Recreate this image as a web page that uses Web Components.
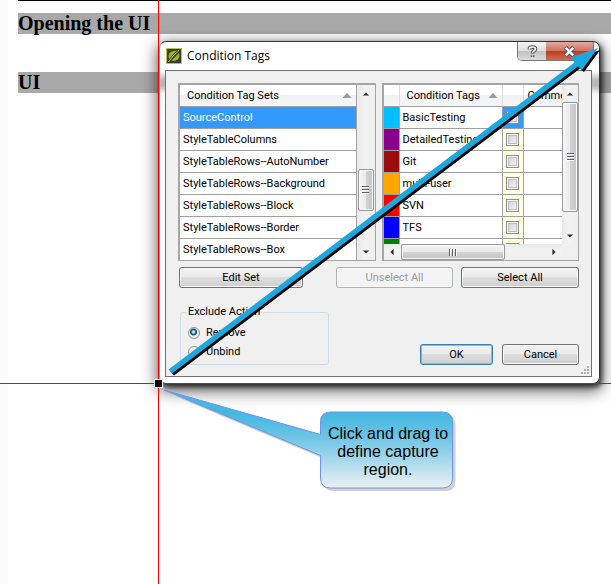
<!DOCTYPE html>
<html lang="en">
<head>
<meta charset="utf-8">
<title>Opening the UI</title>
<style>
html, body { margin: 0; min-height: 100%; background: #fff; }
</style>
</head>
<body>
<help-page>
  <doc-heading>Opening the UI</doc-heading>
  <doc-heading>UI</doc-heading>
  <condition-dialog slot="window"></condition-dialog>
  <capture-overlay slot="notes">Click and drag to define capture region.</capture-overlay>
</help-page>
<script>
class Base extends HTMLElement {
  connectedCallback() {
    if (this.shadowRoot) return;
    this.attachShadow({ mode: 'open' }).innerHTML = this.render();
  }
}
const define = (name, render) => customElements.define(name, class extends Base {
  render() { return render(this); }
});

define('help-page', () => `
<style>
:host { display: block; position: relative; min-height: 584px; overflow: hidden; box-sizing: border-box; padding-left: 18px; background: linear-gradient(90deg, #fbfbfb 8px, #fff 8px); }
article { display: flex; flex-direction: column; gap: 38px; border-top: 1px solid #000; padding-top: 12px; }
</style>
<article><slot></slot></article>
<slot name="window"></slot>
<slot name="notes"></slot>`);

define('doc-heading', () => `
<style>
:host { display: block; }
h2 { margin: 0; background: #a9a9a9; color: #000; font: bold 20px/21px "Liberation Serif", serif; }
</style>
<h2><slot></slot></h2>`);

define('push-button', el => `
<style>
:host { display: flex; }
button { flex: 1; height: 21px; padding: 0; margin: 0; box-sizing: border-box; border: 1px solid #707070; border-radius: 3px; color: #000;
  background: linear-gradient(#f2f2f2, #ebebeb 50%, #dcdcdc 50%, #cfcfcf); box-shadow: inset 0 0 0 1px #fafafa; font: 11px/18px Roboto, "Liberation Sans", sans-serif; }
button:disabled { color: #9a9a9a; border-color: #adb2b5; background: #f4f4f4; }
:host([primary]) button { border-color: #3c7fb1; box-shadow: inset 0 0 0 1px #4dd0f5; }
</style>
<button type="button" ${el.hasAttribute('disabled') ? 'disabled' : ''}><slot></slot></button>`);

define('scroll-bar', el => {
  const h = el.hasAttribute('horizontal');
  const d = h ? ['M7 1 L3 5 L7 9Z', 'M3 1 L7 5 L3 9Z'] : ['M1 7 L5 3 L9 7Z', 'M1 3 L5 7 L9 3Z'];
  const arrow = (path, label) => `<button type="button" aria-label="${label}"><svg width="8" height="8" viewBox="0 0 10 10"><path d="${path}" fill="#303030"/></svg></button>`;
  return `
<style>
:host { display: flex; flex-direction: ${h ? 'row' : 'column'}; background: linear-gradient(${h ? '180deg' : '90deg'}, #e9e9e9, #f2f2f2 40%, #f0f0f0); min-width: 0; min-height: 0; }
button { display: flex; align-items: center; justify-content: center; flex: 0 0 17px; padding: 0; border: 0; background: none; }
.track { flex: 1; display: flex; flex-direction: inherit; min-height: 0; min-width: 0; }
.before { flex: var(--before, 0) 1 0; } .after { flex: var(--after, 0) 1 0; }
.thumb { flex: var(--size, 1) 1 0; display: flex; align-items: center; justify-content: center; box-sizing: border-box; border: 1px solid #979797; border-radius: 2px;
  background: linear-gradient(${h ? '180deg' : '90deg'}, #f5f5f5, #e9e9e9 50%, #d4d4d6 50%, #c3c4c6); box-shadow: inset 0 0 0 1px #fafafa; }
.grip { width: ${h ? 8 : 7}px; height: ${h ? 7 : 8}px; background: repeating-linear-gradient(${h ? '90deg' : '180deg'}, #606060 0 1px, #fff 1px 2px, transparent 2px 3px); }
</style>
${arrow(d[0], h ? 'Scroll left' : 'Scroll up')}
<div class="track"><div class="before"></div><div class="thumb"><div class="grip"></div></div><div class="after"></div></div>
${arrow(d[1], h ? 'Scroll right' : 'Scroll down')}`;
});

const tableStyle = `
:host { display: grid; box-sizing: border-box; height: 178px; border: 2px solid #a5a5a8; border-right-width: 1px; border-bottom-width: 1px; background: #f0f0f0; overflow: hidden; }
.view { overflow: hidden; min-height: 0; min-width: 0; background: #fff; }
table { width: 100%; table-layout: fixed; border-collapse: separate; border-spacing: 0; font: 11px/21px Roboto, "Liberation Sans", sans-serif; }
th, td { box-sizing: border-box; padding: 0; height: 22px; text-align: left; font-weight: normal; white-space: nowrap; overflow: hidden; border-bottom: 1px solid #a0a0a0; }
th { background: linear-gradient(#fff 45%, #f1f2f4 50%, #f4f5f6); }
th > div { display: flex; align-items: center; justify-content: space-between; padding: 0 4px 0 7px; }
.sort { width: 9px; height: 5px; background: #999; clip-path: polygon(50% 0, 100% 100%, 0 100%); }
td { padding-left: 3px; }
`;

define('tag-set-list', () => {
  const rows = ['SourceControl', 'StyleTableColumns', 'StyleTableRows--AutoNumber', 'StyleTableRows--Background', 'StyleTableRows--Block', 'StyleTableRows--Border', 'StyleTableRows--Box'];
  return `
<style>${tableStyle}
:host { grid-template-columns: 1fr 18px; }
.view { border-right: 1px solid #a0a0a0; }
.selected td { background: #3399ff; color: #fff; }
scroll-bar { --before: 68; --size: 41; --after: 32; margin: 0 1px; }
</style>
<div class="view"><table>
<thead><tr><th scope="col"><div>Condition Tag Sets <span class="sort"></span></div></th></tr></thead>
<tbody>${rows.map((r, i) => `<tr${i ? '' : ' class="selected"'}><td>${r}</td></tr>`).join('')}</tbody>
</table></div><scroll-bar></scroll-bar>`;
});

define('tag-list', () => {
  const rows = [['BasicTesting', '#00bfff'], ['DetailedTesting', '#8b008b'], ['Git', '#990d0d'], ['multi-user', '#ffa500'], ['SVN', '#ff0000'], ['TFS', '#0000ff'], ['', '#008000']];
  return `
<style>${tableStyle}
:host { grid-template-columns: 1fr 16px; grid-template-rows: 1fr 16px; }
table { width: 210px; }
th:not(:last-child), td:not(:last-child) { border-right: 1px solid #a0a0a0; }
th:not(:last-child) { border-right-color: #dcdcdc; }
th:last-child > div { padding-left: 4px; }
td:nth-child(3) { background: #fffee1; padding: 0; text-align: center; }
tbody tr:first-child td:nth-child(3) { background: #3399ff; }
input { appearance: none; display: block; width: 13px; height: 13px; margin: 0 auto; box-sizing: border-box; border: 1px solid #8e8f8f; background: linear-gradient(135deg, #c9cdd4, #fafafa); box-shadow: inset 0 0 0 1px #f4f4f4, inset 0 0 0 2px #bcc0c6; }
.right { --before: 0; --size: 108; --after: 15; }
.bottom { --before: 0; --size: 105; --after: 41; }
</style>
<div class="view"><table>
<colgroup><col style="width:16px"><col style="width:103px"><col style="width:21px"><col></colgroup>
<thead><tr><th></th><th scope="col"><div>Condition Tags <span class="sort"></span></div></th><th></th><th scope="col"><div>Comment</div></th></tr></thead>
<tbody>${rows.map(([n, c]) => `<tr><td style="background:${c}"></td><td>${n}</td><td><input type="checkbox" aria-label="${n || 'Tag'}"></td><td></td></tr>`).join('')}</tbody>
</table></div><scroll-bar class="right"></scroll-bar><scroll-bar class="bottom" horizontal></scroll-bar>`;
});

define('exclude-action', () => `
<style>
:host { display: block; width: 149px; }
fieldset { margin: 0; padding: 7px 7px 5px; min-width: 0; border: 1px solid #d3dce4; border-radius: 3px; font: 11px/14px Roboto, "Liberation Sans", sans-serif; display: flex; flex-direction: column; gap: 5px; }
legend { padding: 0 1px; margin-left: -1px; }
label { display: flex; align-items: center; gap: 6px; }
input { appearance: none; box-sizing: border-box; width: 12px; height: 12px; margin: 0; border: 1px solid #8e8f8f; border-radius: 50%; background: radial-gradient(#e4e4e4, #fff); }
input:checked { background: radial-gradient(circle at 45% 40%, #b9ecfb 0 1px, #2d84b5 2px, #163d5a 3px, #f0f0f0 4px, #f4f4f4); }
</style>
<fieldset><legend>Exclude Action</legend>
<label><input type="radio" name="action" checked>Remove</label>
<label><input type="radio" name="action">Unbind</label>
</fieldset>`);

define('condition-dialog', () => `
<style>
:host { position: absolute; left: 159px; top: 41px; width: 441px; box-sizing: border-box; display: flex; flex-direction: column; padding: 0 7px 6px 5px;
  border: 1px solid #333; border-left-color: #999; border-radius: 7px; background: linear-gradient(#fff, #fff 29px, #e8e8e8 32px, #b9b9b9 38px, #b9b9b9 44px, #f8f8f8 52px, #fff 80px);
  box-shadow: 2px 3px 5px rgba(0,0,0,.7), 0 5px 15px 3px rgba(0,0,0,.55); }
header { display: flex; flex: 0 0 28px; gap: 5px; background: #fff; border-radius: 6px; }
.logo { margin: 6px 0 0 1px; }
h1 { flex: 1; margin: 0; font: 12px/28px "Open Sans", "Noto Sans", sans-serif; }
.caption { display: flex; height: 19px; border: 1px solid #777; border-top: 0; border-radius: 0 0 5px 5px; overflow: hidden; box-sizing: border-box; margin-right: -2px; }
.caption button { padding: 0; border: 0; display: flex; align-items: center; justify-content: center; }
.help { width: 28px; background: linear-gradient(#f5f5f5, #ddd 50%, #c0c0c4 50%, #dcdcdc); }
.close { width: 47px; background: linear-gradient(#e4aaa0, #cf705f 50%, #b93c24 50%, #d36a4c); }
main { display: flex; flex-direction: column; box-sizing: border-box; padding: 12px 12px 11px; border: 1px solid #707070; background: #f0f0f0; position: relative; }
.lists { display: grid; grid-template-columns: 1fr 1fr; gap: 6px; }
.actions { display: grid; grid-template-columns: 124px 1fr 118px; column-gap: 8px; padding: 6px 0 0 1px; }
.actions > :nth-child(2) { margin-left: 25px; }
.foot { display: flex; justify-content: space-between; align-items: flex-end; padding: 17px 0 0 2px; }
.ok { display: grid; grid-template-columns: 73px 77px; gap: 9px; }
.size { position: absolute; right: 1px; bottom: 1px; }
</style>
<header>
<svg class="logo" width="16" height="16" viewBox="0 0 16 16" aria-hidden="true"><rect x=".5" y=".5" width="15" height="15" fill="#3b3b35" stroke="#b5c927"/><path d="M3 10.500C1 5 6 2 11.500 3L4.500 11.500ZM13 5C15 11 10 14 5.500 12.500Z" fill="#9db22d"/><path d="M2.500 14Q6 8 13 2.500" fill="none" stroke="#3b3b35" stroke-width="2"/><path d="M2.500 14Q6 8 13 2.500" fill="none" stroke="#c8db35" stroke-width="1"/></svg>
<h1>Condition Tags</h1>
<div class="caption">
<button class="help" type="button" aria-label="Help"><svg width="11" height="13" viewBox="0 0 11 13"><g fill="none"><path d="M2.500 4.500V3.500Q2.500 2 5.500 2T8.500 4Q8.500 5 6.500 6.200Q5.500 7 5.500 8.500M5.500 10V12" stroke="#4a4e59" stroke-width="3.600"/><path d="M2.500 4.200V3.500Q2.500 2 5.500 2T8.500 4Q8.500 5 6.500 6.200Q5.500 7 5.500 8M5.500 10.200V11.500" stroke="#fff" stroke-width="1.600"/></g></svg></button>
<button class="close" type="button" aria-label="Close"><svg width="13" height="11" viewBox="0 0 13 11"><path d="M2.500 1.500L10.500 9.500M10.500 1.500L2.500 9.500" stroke="#535666" stroke-width="4.500"/><path d="M2.700 1.700L10.300 9.300M10.300 1.700L2.700 9.300" stroke="#fff" stroke-width="2.500"/></svg></button>
</div>
</header>
<main>
<div class="lists"><tag-set-list></tag-set-list><tag-list></tag-list></div>
<div class="actions"><push-button>Edit Set</push-button><push-button disabled>Unselect All</push-button><push-button>Select All</push-button></div>
<div class="foot"><exclude-action></exclude-action><div class="ok"><push-button primary>OK</push-button><push-button>Cancel</push-button></div></div>
<svg class="size" width="10" height="10" viewBox="0 0 10 10" fill="#b0b0b0" aria-hidden="true"><path d="M7 1h2v2h-2zM7 4h2v2h-2zM7 7h2v2h-2zM4 4h2v2h-2zM4 7h2v2h-2zM1 7h2v2h-2z"/></svg>
</main>`);

define('capture-overlay', () => `
<style>
:host { position: absolute; inset: 0; pointer-events: none; }
svg { position: absolute; inset: 0; width: 100%; height: 100%; overflow: visible; }
p { position: absolute; left: 320px; top: 412px; width: 133px; box-sizing: border-box; margin: 0; padding: 13px 3px 9px 6px; font: 16px/18px "Liberation Sans", sans-serif; text-align: center; }
</style>
<svg aria-hidden="true">
<defs><linearGradient id="g" gradientUnits="userSpaceOnUse" x1="0" y1="412" x2="0" y2="489"><stop offset="0" stop-color="#43b7e1"/><stop offset=".3" stop-color="#68c3e4"/><stop offset="1" stop-color="#edf1f4"/></linearGradient>
<path id="c" d="M330.500 412H442.500Q452.500 412 452.500 422V478Q452.500 488 442.500 488H330.500Q320.500 488 320.500 478V455.500L164 390L320.500 434.500V422Q320.500 412 330.500 412Z"/></defs>
<rect x="158" y="0" width="1" height="100%" fill="red"/><rect x="0" y="383" width="100%" height="1" fill="red"/>
<rect x="154.500" y="379.500" width="8" height="8" fill="#000" stroke="#fff"/>
<use href="#c" transform="translate(3 3)" fill="#d0d0d0"/>
<use href="#c" fill="url(#g)" stroke="#6f93e8"/>
<path d="M168.500 369.500L574.500 62.500L570.500 57.500L598 48L582 70L578 66.500L172 373.500Z" transform="translate(2 2)" fill="#000"/>
<path d="M168.500 369.500L574.500 62.500L570.500 57.500L598 48L582 70L578 66.500L172 373.500Z" fill="#19a9df"/>
</svg>
<p><slot></slot></p>`);
</script>
</body>
</html>
